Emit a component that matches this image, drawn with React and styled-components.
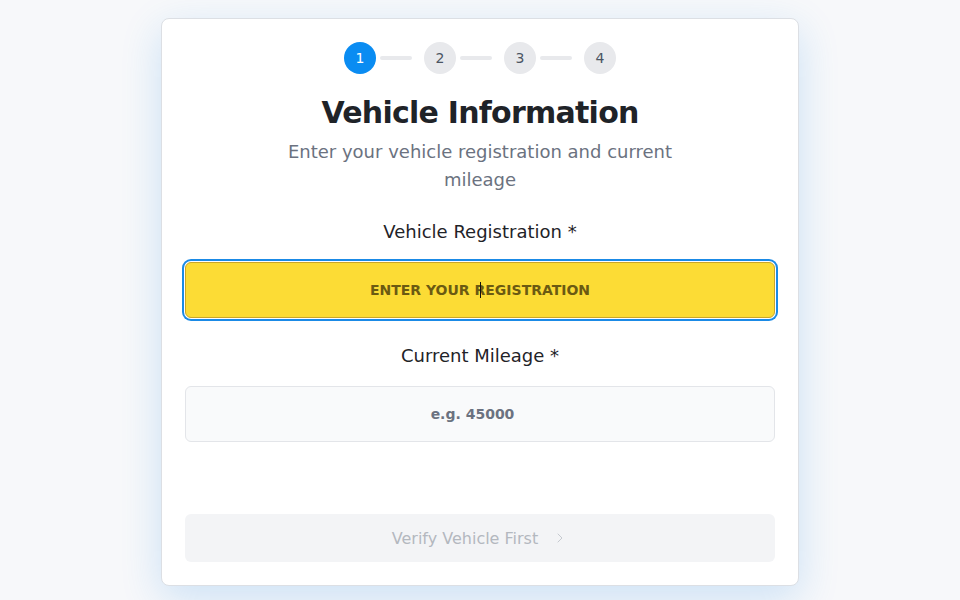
import styled, { createGlobalStyle } from "styled-components";
import { ChevronRight } from "lucide-react";

const GlobalStyle = createGlobalStyle`
  html, body {
    margin: 0;
    padding: 0;
    background: #f7f8fa;
    font-family: "DejaVu Sans", "Liberation Sans", sans-serif;
  }
  * { box-sizing: border-box; }
`;

const steps = [1, 2, 3, 4];

export default function App() {
  return (
    <>
      <GlobalStyle />
      <Page>
        <Card>
          <Stepper>
            {steps.map((n, i) => (
              <StepItem key={n}>
                <StepDot $active={n === 1}>{n}</StepDot>
                {i < steps.length - 1 && <StepLine />}
              </StepItem>
            ))}
          </Stepper>

          <Title>Vehicle Information</Title>
          <Subtitle>Enter your vehicle registration and current mileage</Subtitle>

          <Field>
            <Label>Vehicle Registration *</Label>
            <PlateWrap>
              <PlateInput placeholder="ENTER YOUR REGISTRATION" readOnly />
              <Caret />
            </PlateWrap>
          </Field>

          <Field>
            <Label>Current Mileage *</Label>
            <MileageInput type="number" placeholder="e.g. 45000" readOnly />
          </Field>

          <SubmitButton disabled>
            Verify Vehicle First
            <ChevronRight size={16} strokeWidth={1.5} />
          </SubmitButton>
        </Card>
      </Page>
    </>
  );
}

const Page = styled.div`
  min-height: 600px;
  display: flex;
  justify-content: center;
  padding-top: 18px;
`;

const Card = styled.div`
  width: 638px;
  height: 568px;
  background: #fff;
  border: 1px solid #dcdfe4;
  border-radius: 8px;
  padding: 23px 23px;
  box-shadow: 0 12px 40px rgba(30, 136, 229, 0.2);
  display: flex;
  flex-direction: column;
  align-items: center;
`;

const Stepper = styled.div`
  display: flex;
  align-items: center;
  margin-bottom: 20px;
`;

const StepItem = styled.div`
  display: flex;
  align-items: center;
`;

const StepDot = styled.div`
  width: 32px;
  height: 32px;
  border-radius: 50%;
  display: flex;
  align-items: center;
  justify-content: center;
  font-size: 14px;
  background: ${(p) => (p.$active ? "#0a8cf2" : "#e8e9ec")};
  color: ${(p) => (p.$active ? "#fff" : "#4b5563")};
`;

const StepLine = styled.div`
  width: 32px;
  height: 4px;
  border-radius: 2px;
  background: #e8e9ec;
  margin: 0 12px 0 4px;
`;

const Title = styled.h1`
  margin: 0 0 6px;
  font-size: 30px;
  line-height: 38px;
  font-weight: 700;
  letter-spacing: -0.75px;
  color: #1f2328;
`;

const Subtitle = styled.p`
  margin: 0 0 24px;
  max-width: 400px;
  text-align: center;
  font-size: 18px;
  line-height: 28px;
  color: #6b7280;
`;

const Field = styled.div`
  width: 100%;
  display: flex;
  flex-direction: column;
  align-items: center;
  margin-bottom: 24px;
`;

const Label = styled.label`
  font-size: 18px;
  line-height: 28px;
  color: #1f2328;
  margin-bottom: 16px;
`;

const PlateWrap = styled.div`
  position: relative;
  width: 100%;
`;

const PlateInput = styled.input`
  width: 100%;
  height: 56px;
  background: #fcdc35;
  border: 1px solid #c8a62a;
  border-radius: 6px;
  box-shadow: 0 0 0 1px #fff, 0 0 0 3px #1a8ae6;
  outline: none;
  text-align: center;
  font-family: inherit;
  font-size: 14px;
  font-weight: 700;
  color: #5c4a08;
  &::placeholder {
    color: #6b5a12;
    opacity: 1;
  }
`;

const Caret = styled.span`
  position: absolute;
  left: 295px;
  top: 20px;
  width: 1px;
  height: 16px;
  background: #111;
`;

const MileageInput = styled.input`
  width: 100%;
  height: 56px;
  background: #f9fafb;
  border: 1px solid #e3e5e9;
  border-radius: 6px;
  outline: none;
  text-align: center;
  font-family: inherit;
  font-size: 14px;
  font-weight: 700;
  color: #374151;
  &::placeholder {
    color: #6b7280;
    opacity: 1;
  }
`;

const SubmitButton = styled.button`
  margin-top: auto;
  width: 100%;
  height: 48px;
  border: none;
  border-radius: 6px;
  background: #f3f4f6;
  color: #b3b8bf;
  font-family: inherit;
  font-size: 16px;
  display: flex;
  align-items: center;
  justify-content: center;
  gap: 14px;
  cursor: not-allowed;
  svg {
    color: #c6cad0;
  }
`;
